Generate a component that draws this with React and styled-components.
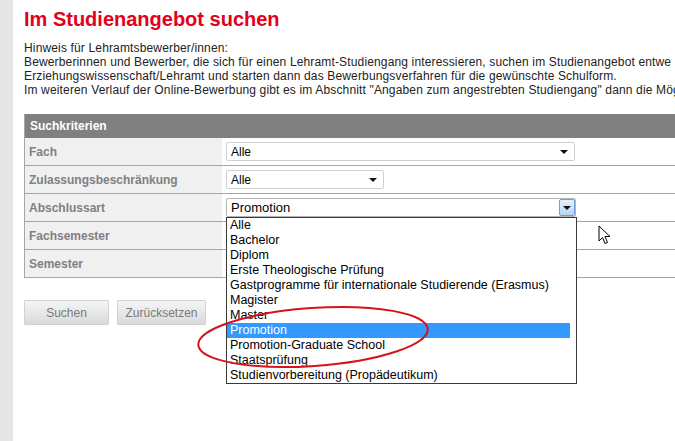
import React from 'react';
import styled, { createGlobalStyle } from 'styled-components';

const GlobalStyle = createGlobalStyle`
  html, body {
    margin: 0;
    padding: 0;
    background: #fff;
    overflow: hidden;
  }
  body {
    font-family: "Liberation Sans", Arial, sans-serif;
  }
`;

const criteria = [
  { label: 'Fach', value: 'Alle', width: 349 },
  { label: 'Zulassungsbeschränkung', value: 'Alle', width: 158 },
  { label: 'Abschlussart', value: 'Promotion', width: 350, open: true },
  { label: 'Fachsemester' },
  { label: 'Semester' },
];

const options = [
  'Alle',
  'Bachelor',
  'Diplom',
  'Erste Theologische Prüfung',
  'Gastprogramme für internationale Studierende (Erasmus)',
  'Magister',
  'Master',
  'Promotion',
  'Promotion-Graduate School',
  'Staatsprüfung',
  'Studienvorbereitung (Propädeutikum)',
];

const App = () => {
  return (
    <Page>
      <GlobalStyle />
      <Strip />
      <Main>
        <Title>Im Studienangebot suchen</Title>
        <Intro>
          Hinweis für Lehramtsbewerber/innen:<br />
          Bewerberinnen und Bewerber, die sich für einen Lehramt-Studiengang interessieren, suchen im Studienangebot entwe<br />
          Erziehungswissenschaft/Lehramt und starten dann das Bewerbungsverfahren für die gewünschte Schulform.<br />
          Im weiteren Verlauf der Online-Bewerbung gibt es im Abschnitt "Angaben zum angestrebten Studiengang" dann die Mög
        </Intro>

        <Table>
          <Header>Suchkriterien</Header>
          {criteria.map((c) => (
            <Row key={c.label}>
              <Label>{c.label}</Label>
              <Cell>
                {c.value && (
                  <SelectBox style={{ width: c.width }} active={c.open}>
                    <span>{c.value}</span>
                    {c.open ? (
                      <ArrowButton><Triangle /></ArrowButton>
                    ) : (
                      <Triangle />
                    )}
                    {c.open && (
                      <List>
                        {options.map((o) => (
                          <Option key={o} selected={o === 'Promotion'}>{o}</Option>
                        ))}
                      </List>
                    )}
                  </SelectBox>
                )}
              </Cell>
            </Row>
          ))}
        </Table>

        <Buttons>
          <Button width={85}>Suchen</Button>
          <Button width={89}>Zurücksetzen</Button>
        </Buttons>
      </Main>

      <Circle width="240" height="80" viewBox="0 0 240 80">
        <ellipse cx="118" cy="38" rx="115" ry="29" fill="none" stroke="#d8121c" strokeWidth="2" transform="rotate(-4 118 38)" />
      </Circle>

      <Cursor width="13" height="21" viewBox="0 0 13 21">
        <path d="M1 1 L1 16 L4.5 12.5 L7 18.5 L9.5 17.5 L7 11.5 L12 11.5 Z" fill="#fff" stroke="#000" strokeWidth="1" strokeLinejoin="round" />
      </Cursor>
    </Page>
  );
};

export default App;

const Page = styled.div`
  position: relative;
  display: flex;
  min-height: 441px;
`;

const Strip = styled.div`
  width: 13px;
  flex-shrink: 0;
  background: #e6e6e6;
`;

const Main = styled.div`
  padding: 7px 0 0 11px;
  width: 800px;
  flex-shrink: 0;
`;

const Title = styled.h1`
  margin: 0;
  font-size: 20px;
  line-height: 24px;
  font-weight: bold;
  color: #e3001b;
`;

const Intro = styled.p`
  margin: 10px 0 0;
  font-size: 12px;
  line-height: 14px;
  letter-spacing: 0.15px;
  color: #222;
  white-space: nowrap;
`;

const Table = styled.div`
  margin-top: 17px;
  border-left: 1px solid #a6a6a6;
`;

const Header = styled.div`
  height: 24px;
  line-height: 24px;
  padding-left: 5px;
  background: #808080;
  color: #fff;
  font-size: 12px;
  font-weight: bold;
`;

const Row = styled.div`
  display: grid;
  grid-template-columns: 197px 1fr;
  height: 28px;
  box-sizing: border-box;
  border-bottom: 1px solid #a6a6a6;
`;

const Label = styled.div`
  display: flex;
  align-items: center;
  padding-left: 4px;
  background: #f0f0f0;
  color: #808080;
  font-size: 12px;
  font-weight: bold;
`;

const Cell = styled.div`
  display: flex;
  align-items: center;
  padding-left: 4px;
`;

const SelectBox = styled.div`
  position: relative;
  display: flex;
  align-items: center;
  justify-content: space-between;
  box-sizing: border-box;
  height: 19px;
  padding: 0 6px 0 4px;
  background: #fff;
  border: 1px solid ${(p) => (p.active ? '#b5b5b5' : '#d0d0d0')};
  border-radius: 2px;
  font-size: ${(p) => (p.active ? '13px' : '12px')};
  color: #000;
  ${(p) => p.active && 'padding-right: 0;'}
`;

const Triangle = styled.span`
  width: 0;
  height: 0;
  border-left: 4px solid transparent;
  border-right: 4px solid transparent;
  border-top: 4px solid #111;
`;

const ArrowButton = styled.span`
  display: flex;
  align-items: center;
  justify-content: center;
  width: 16px;
  height: 17px;
  box-sizing: border-box;
  border: 1px solid #6f9fd3;
  border-radius: 2px;
  background: linear-gradient(#e6f1fc, #b4d6f5);
`;

const List = styled.div`
  position: absolute;
  top: 18px;
  left: -1px;
  width: 351px;
  box-sizing: border-box;
  border: 1px solid #3a3a3a;
  background: #fff;
  padding-right: 6px;
  z-index: 2;
`;

const Option = styled.div`
  height: 15px;
  line-height: 15px;
  padding-left: 3px;
  font-size: 12.5px;
  white-space: nowrap;
  color: ${(p) => (p.selected ? '#fff' : '#000')};
  background: ${(p) => (p.selected ? '#3399ff' : 'transparent')};
`;

const Buttons = styled.div`
  display: flex;
  gap: 8px;
  margin-top: 22px;
`;

const Button = styled.button`
  width: ${(p) => p.width}px;
  height: 25px;
  padding: 0;
  border: 1px solid #d2d2d2;
  border-radius: 1px;
  background: linear-gradient(#f5f5f5, #dadada);
  color: #7a7a7a;
  font-family: "Liberation Sans", Arial, sans-serif;
  font-size: 12px;
`;

const Circle = styled.svg`
  position: absolute;
  left: 195px;
  top: 299px;
  z-index: 3;
  pointer-events: none;
`;

const Cursor = styled.svg`
  position: absolute;
  left: 598px;
  top: 225px;
  z-index: 4;
`;
